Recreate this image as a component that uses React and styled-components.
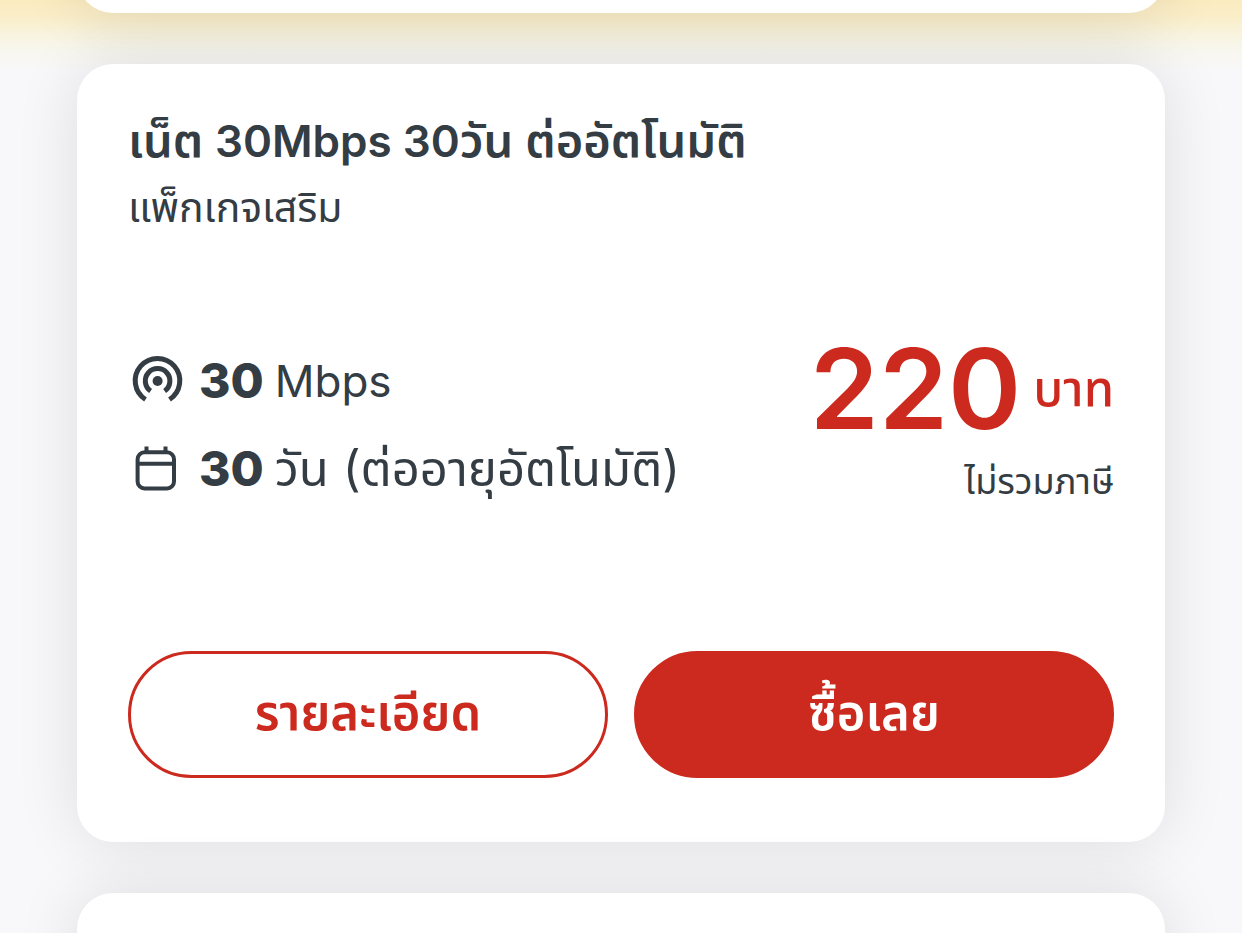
import React from "react";
import styled, { createGlobalStyle, css } from "styled-components";

const ink = "#343c44";
const red = "#cc2a1e";

const GlobalStyle = createGlobalStyle`
  * { box-sizing: border-box; }
  html { background: #f8f8fc; }
  body {
    margin: 0;
    color: ${ink};
    font-family: Inter, "Noto Sans Thai", "Noto Sans", sans-serif;
    -webkit-font-smoothing: antialiased;
  }
  h2, p, ul { margin: 0; padding: 0; }
`;

const Page = styled.main`
  display: flex;
  flex-direction: column;
  gap: 51px;
  min-height: 100vh;
  max-height: 100vh;
  overflow: hidden;
  padding: 0 77px;
  background: linear-gradient(#fbebc0 0px, #faeec8 16px, #f8f6ea 44px, #f8f8fb 72px);
`;

const Card = styled.article`
  flex: none;
  padding: 48px 51px 64px;
  border-radius: 36px;
  background: #fff;
  box-shadow: 0 0 64px rgba(20, 20, 20, 0.11);
`;

const PreviousCard = styled(Card)`
  margin-top: -99px;
`;

const Latin = styled.span`
  font-size: 44px;
`;

const Title = styled.h2`
  font-size: 47px;
  line-height: 56px;
  font-weight: 600;
`;

const Subtitle = styled.p`
  margin-top: 12px;
  font-size: 41px;
  line-height: 52px;
`;

const Body = styled.div`
  display: flex;
  justify-content: space-between;
  margin-top: 104px;
`;

const FeatureList = styled.ul`
  display: flex;
  flex-direction: column;
  gap: 28px;
  padding-top: 14px;
  list-style: none;
`;

const Feature = styled.li`
  display: flex;
  align-items: center;
  gap: 11px;
  font-size: 49px;
  line-height: 60px;
  white-space: nowrap;
`;

const Amount = styled.strong`
  font-size: 48px;
  font-weight: 800;
`;

const FeatureIcon = styled.svg`
  flex: none;
  width: 60px;
  height: 60px;
  fill: none;
  stroke: currentColor;
`;

const PriceBlock = styled.div`
  display: flex;
  flex-direction: column;
  align-items: flex-end;
`;

const Price = styled.p`
  display: flex;
  align-items: center;
  gap: 12px;
  color: ${red};
  font-size: 111px;
  line-height: 104px;
  font-weight: 600;
`;

const Currency = styled.span`
  font-size: 49px;
  font-weight: 500;
`;

const TaxNote = styled.p`
  margin-top: 18px;
  font-size: 36px;
  line-height: 44px;
`;

const Actions = styled.div`
  display: grid;
  grid-template-columns: 1fr 1fr;
  gap: 26px;
  margin-top: 148px;
`;

const Button = styled.button`
  height: 127px;
  border: 3px solid ${red};
  border-radius: 64px;
  background: transparent;
  color: ${red};
  font-family: inherit;
  font-size: 49px;
  font-weight: 600;
  cursor: pointer;
  ${({ $primary }) => $primary && css`
    background: ${red};
    color: #fff;
  `}
`;

const SignalIcon = () => (
  <FeatureIcon viewBox="0 0 60 60" strokeWidth="5" aria-hidden="true">
    <path d="M17.5 48.5A22.3 22.3 0 1 1 41.5 48.5" />
    <path d="M22.6 40A12.3 12.3 0 1 1 36.6 40" />
    <circle cx="29.6" cy="30" r="5" fill="currentColor" stroke="none" />
  </FeatureIcon>
);

const CalendarIcon = () => (
  <FeatureIcon viewBox="0 0 60 60" strokeWidth="4" aria-hidden="true">
    <rect x="9.6" y="13.3" width="36.4" height="36.2" rx="7" />
    <path d="M10 24.7H46M18.5 7.5V13M37.5 7.5V13" />
  </FeatureIcon>
);

export default function App() {
  return (
    <>
      <GlobalStyle />
      <Page>
        <PreviousCard />
        <Card>
          <Title>เน็ต <Latin>30Mbps 30</Latin>วัน ต่ออัตโนมัติ</Title>
          <Subtitle>แพ็กเกจเสริม</Subtitle>
          <Body>
            <FeatureList>
              <Feature>
                <SignalIcon />
                <Amount>30</Amount>
                <Latin>Mbps</Latin>
              </Feature>
              <Feature>
                <CalendarIcon />
                <Amount>30</Amount>
                <span>วัน (ต่ออายุอัตโนมัติ)</span>
              </Feature>
            </FeatureList>
            <PriceBlock>
              <Price>
                220
                <Currency>บาท</Currency>
              </Price>
              <TaxNote>ไม่รวมภาษี</TaxNote>
            </PriceBlock>
          </Body>
          <Actions>
            <Button type="button">รายละเอียด</Button>
            <Button type="button" $primary>ซื้อเลย</Button>
          </Actions>
        </Card>
        <Card />
      </Page>
    </>
  );
}
